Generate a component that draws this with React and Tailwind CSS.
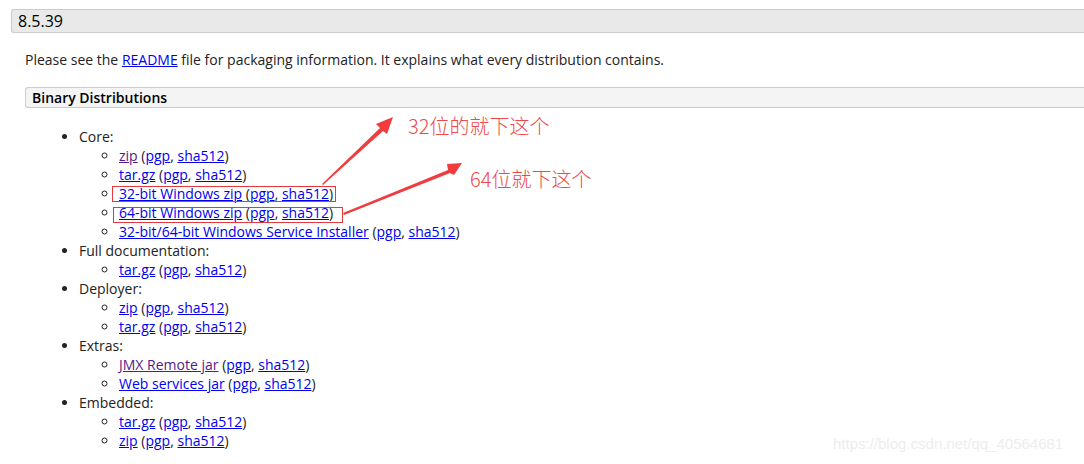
const A = ({ children, visited }) => (
  <a href="#" className={`underline ${visited ? "text-[#551a8b]" : "text-[#0000ee]"}`}>
    {children}
  </a>
);

const Sigs = () => (
  <>
    {" "}(<A>pgp</A>, <A>sha512</A>)
  </>
);

const groups = [
  { title: "Core:", items: [["zip", true], ["tar.gz"], ["32-bit Windows zip"], ["64-bit Windows zip"], ["32-bit/64-bit Windows Service Installer"]] },
  { title: "Full documentation:", items: [["tar.gz"]] },
  { title: "Deployer:", items: [["zip"], ["tar.gz"]] },
  { title: "Extras:", items: [["JMX Remote jar", true], ["Web services jar"]] },
  { title: "Embedded:", items: [["tar.gz"], ["zip"]] },
];

export default function App() {
  return (
    <div className="relative w-[1084px] h-[464px] overflow-hidden bg-white font-['Open_Sans',sans-serif] text-[14px] leading-[19px] text-[#222]">
      <div className="pt-[9px] pl-[11px]">
        <h3 className="h-[24px] border border-r-0 border-[#ccc] rounded-l-[3px] bg-[#e9e9e9] pl-[6px] text-[16px] leading-[22px] font-normal text-black">
          8.5.39
        </h3>
        <div className="pl-[14px]">
          <p className="mt-[17px]">
            Please see the <A>README</A> file for packaging information. It explains what every distribution contains.
          </p>
          <h4 className="mt-[18px] h-[21px] border border-r-0 border-[#ccc] rounded-l-[3px] bg-[#f4f4f4] pl-[6px] leading-[19px] font-semibold text-black">
            Binary Distributions
          </h4>
          <ul className="mt-[19px] pl-[54px] list-disc">
            {groups.map((g) => (
              <li key={g.title}>
                {g.title}
                <ul className="pl-[40px] list-[circle]">
                  {g.items.map(([name, visited], i) => (
                    <li key={i}>
                      <A visited={visited}>{name}</A>
                      <Sigs />
                    </li>
                  ))}
                </ul>
              </li>
            ))}
          </ul>
        </div>
      </div>

      <svg className="absolute left-0 top-0 pointer-events-none" width="1084" height="464">
        <rect x="112.5" y="186.5" width="223" height="15" fill="none" stroke="#e8383d" strokeWidth="1" />
        <rect x="113.5" y="207.5" width="229" height="15" fill="none" stroke="#e8383d" strokeWidth="1" />
        <polygon points="322,184 380,128 376,124 393,117 387,134 383,131 323,185" fill="#f03c3c" />
        <polygon points="343,213 448,170 447,164 462,163 454,175 450,173 344,215" fill="#f03c3c" />
      </svg>

      <span className="absolute left-[408px] top-[114px] text-[20px] leading-[24px] text-[#f04848] font-['Noto_Sans_CJK_SC',sans-serif] font-light">
        32位的就下这个
      </span>
      <span className="absolute left-[470px] top-[167px] text-[20px] leading-[24px] text-[#f04848] font-['Noto_Sans_CJK_SC',sans-serif] font-light">
        64位就下这个
      </span>
      <span className="absolute left-[833px] top-[435px] text-[15px] leading-[18px] text-[#ededed] font-['Liberation_Sans',sans-serif]">
        https://blog.csdn.net/qq_40564681
      </span>
    </div>
  );
}
